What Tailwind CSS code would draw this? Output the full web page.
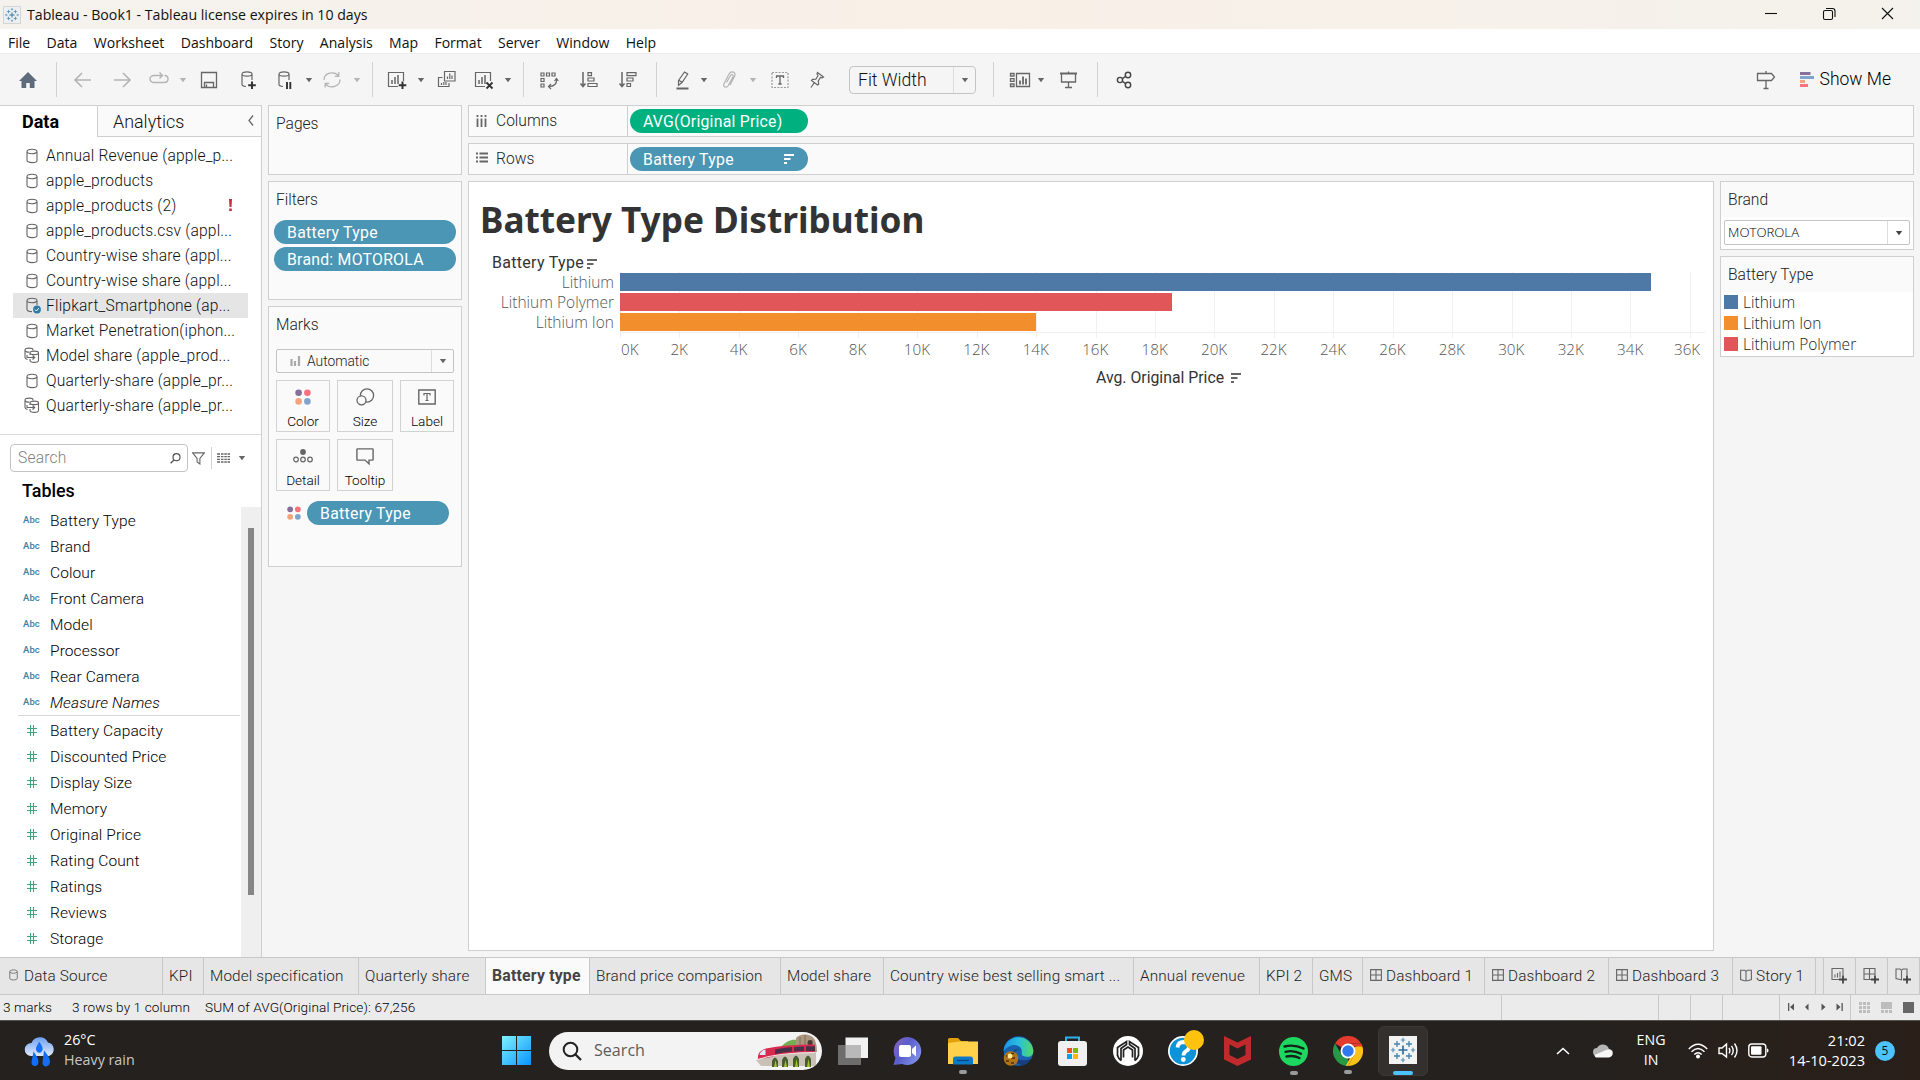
<!DOCTYPE html>
<html lang="en">
<head>
<meta charset="utf-8">
<title>Tableau - Book1</title>
<script src="https://cdn.jsdelivr.net/npm/@tailwindcss/browser@4"></script>
</head>
<body class="w-[1920px] h-[1080px] overflow-hidden bg-[#f5f5f5] font-['Roboto',sans-serif] text-[15.5px] font-light text-[#1c1c1c] flex flex-col whitespace-nowrap">

<svg class="hidden">
  <symbol id="db" viewBox="0 0 12 16"><path d="M1 3.5C1 .4 11 .4 11 3.5V12.5C11 15.3 1 15.3 1 12.5ZM1 3.5C1 6.4 11 6.4 11 3.5" fill="none" stroke="#666" stroke-width="1.1"/></symbol>
  <symbol id="dbcheck" viewBox="0 0 15 17"><path d="M6 14.6C3 14.5 1 13.8 1 12.5V3.5C1 .4 11 .4 11 3.5V8M1 3.5C1 6.4 11 6.4 11 3.5" fill="none" stroke="#666" stroke-width="1.1"/><circle cx="11" cy="12.5" r="3.9" fill="#2f7ba5"/><path d="M9 12.6l1.4 1.4 2.4-2.8" fill="none" stroke="#fff" stroke-width="1"/></symbol>
  <symbol id="dblink" viewBox="0 0 16 17"><path d="M3.5 12.5C1.800 12 1 11.500 1 10.500V3C1 .5 9 .5 9 3V3.500M1 3C1 5 4 5.300 5.500 5" fill="none" stroke="#666" stroke-width="1.1"/><path d="M6 6C6 3.500 14.500 3.500 14.500 6V13.500C14.500 16 6 16 6 13.500V12M6 6C6 8.200 14.500 8.200 14.500 6M6 6V8M3 8v2.500h7.500M8.500 8.500l2.200 2-2.200 2" fill="none" stroke="#666" stroke-width="1.1"/></symbol>
  <symbol id="dots" viewBox="0 0 16 16"><circle cx="3.6" cy="3.8" r="3.3" fill="#86709a"/><circle cx="12.400" cy="3.8" r="3.3" fill="#f8717f"/><circle cx="3.6" cy="12.4" r="3.3" fill="#f2a47c"/><circle cx="12.400" cy="12.4" r="3.3" fill="#80a5cd"/></symbol>
  <symbol id="sort" viewBox="0 0 10 10"><path d="M0 1h10M0 5h6.500M0 9h3" fill="none" stroke="currentColor" stroke-width="2"/></symbol>
  <symbol id="caret" viewBox="0 0 8 6"><path d="M.8 1H7.200L4 5.200Z" fill="currentColor"/></symbol>
  <symbol id="dash" viewBox="0 0 12 12"><path d="M.6.6H11.400V11.400H.6ZM6 .6V11.400M.6 6H11.400" fill="none" stroke="#666" stroke-width="1.1"/></symbol>
  <symbol id="story" viewBox="0 0 12 13"><path d="M6 2.500L4.600 1.200H.6V10.500L4.400 11.700H7.600L11.400 10.500V1.200H7.400ZM6 2.500V11.500" fill="none" stroke="#666" stroke-width="1.1"/></symbol>
  <symbol id="logo" viewBox="0 0 28 28"><path d="M14 9.500v9M9.500 14h9" stroke="#2f6f9f" stroke-width="1.700"/><path d="M8 5v6M5 8h6M20 5v6M17 8h6M8 17v6M5 20h6M20 17v6M17 20h6" stroke="#4484ac" stroke-width="1.3"/><path d="M14 1.800v4.400M11.800 4h4.400M14 21.800v4.400M11.800 24h4.400M4 11.800v4.400M1.800 14h4.400M24 11.800v4.400M21.800 14h4.400" stroke="#5a93b8" stroke-width="1.2"/></symbol>
</svg>

<!-- title bar -->
<header class="h-[29px] shrink-0 flex items-center bg-linear-to-r from-[#f5f2ee] via-[#f9f0e7] to-[#f4f2ec] font-['Open_Sans',sans-serif] font-normal text-[14.150px] text-[#111] pl-[3px]">
  <span class="size-[18px] bg-[#edf0f2] border border-[#d5d5d5] flex items-center justify-center mr-[6px]"><svg class="size-4"><use href="#logo"/></svg></span>
  <span>Tableau - Book1 - Tableau license expires in 10 days</span>
  <svg class="ml-auto mr-5 -mt-px" width="142" height="20" viewBox="0 0 142 20" fill="none" stroke="#111" stroke-width="1.1"><path d="M7 9.500H19"/><rect x="65.500" y="6.500" width="9" height="9" rx="1.500"/><path d="M68 4.500h6.500q2.500 0 2.500 2.500v6"/><path d="M124 4l11 11M135 4l-11 11"/></svg>
</header>

<!-- menu -->
<nav class="h-[25px] shrink-0 bg-white flex items-center font-['Open_Sans',sans-serif] font-normal text-[14.050px] text-[#111] pl-2 pt-[3px] gap-[16.350px] border-b border-[#ececec]">
  <span>File</span><span>Data</span><span>Worksheet</span><span>Dashboard</span><span>Story</span><span>Analysis</span><span>Map</span><span>Format</span><span>Server</span><span>Window</span><span>Help</span>
</nav>

<!-- toolbar -->
<div class="h-[51px] shrink-0 flex items-center text-[#666]">
  <svg class="size-6 ml-4" viewBox="0 0 24 24"><path d="M12 4L3 13h2.500v7h4.700v-5h3.600v5h4.700v-7H21z" fill="#5e6b7a"/></svg>
  <i class="w-px h-[35px] bg-[#d2d2d2] ml-4"></i>
  <svg class="size-6 ml-[14px]" viewBox="0 0 24 24" fill="none" stroke="#b4b4b4" stroke-width="1.600"><path d="M20 12H4.500M11 5l-7 7 7 7"/></svg>
  <svg class="size-6 ml-[15px]" viewBox="0 0 24 24" fill="none" stroke="#b4b4b4" stroke-width="1.600"><path d="M4 12H19.500M13 5l7 7-7 7"/></svg>
  <svg class="size-6 ml-[13px]" viewBox="0 0 24 24" fill="none" stroke="#b4b4b4" stroke-width="1.4"><path d="M15 14.500H7a4 3.500 0 0 1 0-7H15M17.500 7.500q3.500 0 3.500 3.500T17 14.500h-2M12.500 4.500L15.500 7.500l-3 3" /></svg>
  <svg class="w-2 h-1.5 ml-2 text-[#b4b4b4]"><use href="#caret"/></svg>
  <svg class="size-6 ml-[10px]" viewBox="0 0 24 24" fill="none" stroke="#666" stroke-width="1.3"><path d="M4.500 4.500h15v15h-15zM7.500 19v-4.500h9V19M9.500 19v-2.500"/></svg>
  <svg class="size-6 ml-[15px]" viewBox="0 0 24 24" fill="none" stroke="#666" stroke-width="1.2"><path d="M10 18.500C7.500 18.200 6 17.500 6 16.500V6C6 3.200 16 3.200 16 6v6M6 6C6 8.800 16 8.800 16 6"/><path d="M16 13.500v7.500M12.200 17.300h7.600" stroke="#333" stroke-width="2"/></svg>
  <svg class="size-6 ml-[13px]" viewBox="0 0 24 24" fill="none" stroke="#666" stroke-width="1.2"><path d="M10 18.500C7.500 18.200 6 17.500 6 16.500V6C6 3.200 16 3.200 16 6v6M6 6C6 8.800 16 8.800 16 6"/><path d="M14 14v7M17.300 14v7" stroke="#333" stroke-width="1.900"/></svg>
  <svg class="w-2 h-1.5 ml-2"><use href="#caret"/></svg>
  <svg class="size-6 ml-[7px]" viewBox="0 0 24 24" fill="none" stroke="#b4b4b4" stroke-width="1.3"><path d="M4 12a8 7 0 0 1 14.500-4.200M20 11.500a8 7 0 0 1-14.500 4.300M18.800 4v4.300h-4M5.200 19.500v-4.200h4"/></svg>
  <svg class="w-2 h-1.5 ml-[9px] text-[#b4b4b4]"><use href="#caret"/></svg>
  <i class="w-px h-[35px] bg-[#d2d2d2] ml-[11px]"></i>
  <svg class="size-6 ml-[12px] mr-px" viewBox="0 0 24 24" fill="none" stroke="#666" stroke-width="1.2"><path d="M13 18.500H3.500v-14h15v8.500"/><path d="M7 16v-4M10 16V9M13 16V7" stroke-width="1.500"/><path d="M17.500 13.500v7.500M13.700 17.300h7.600" stroke="#333" stroke-width="2"/></svg>
  <svg class="w-2 h-1.5 ml-[7px]"><use href="#caret"/></svg>
  <svg class="size-6 ml-[10px]" viewBox="0 0 24 24" fill="none" stroke="#666" stroke-width="1.2"><path d="M9.500 3.500h10.500v9.500H9.500zM7.500 9.500H3.500V18.500h10.500v-3.500"/><path d="M12.500 11V8.500M14.800 11V5.500M17 11V7.500M6.500 17v-2M8.800 17v-3M11 17v-3"/></svg>
  <svg class="size-6 ml-[13px]" viewBox="0 0 24 24" fill="none" stroke="#666" stroke-width="1.2"><path d="M13 18.500H3.500v-14h15v8.500"/><path d="M7 16v-4M10 16V9M13 16V7" stroke-width="1.500"/><path d="M14.500 14.500l6 6M20.500 14.500l-6 6" stroke="#333" stroke-width="1.800"/></svg>
  <svg class="w-2 h-1.5 ml-2"><use href="#caret"/></svg>
  <i class="w-px h-[35px] bg-[#d2d2d2] ml-[11px]"></i>
  <svg class="size-6 ml-[13px]" viewBox="0 0 24 24" fill="none" stroke="#666" stroke-width="1.2"><path d="M4 5h3v3H4zM9.500 5h3v3h-3zM15 5h3v3h-3zM4 10.500h3v3H4zM4 16h3v3H4z"/><path d="M19.500 11.500c.5 4-2.500 7-7 7M17.500 13l2-2.500 1.800 2.500M14 16l-2.500 2.500L14 21"/></svg>
  <svg class="size-6 ml-4" viewBox="0 0 24 24" fill="none" stroke="#666" stroke-width="1.2"><path d="M6 4v14M3.500 15.500L6 18.500l2.500-3" stroke-width="1.500"/><path d="M11 4.600h3.500v3H11zM11 10h6v3h-6zM11 15.500h9v3h-9z"/></svg>
  <svg class="size-6 ml-[15px]" viewBox="0 0 24 24" fill="none" stroke="#666" stroke-width="1.2"><path d="M6 4v14M3.500 15.500L6 18.500l2.500-3" stroke-width="1.500"/><path d="M11 4.600h9v3h-9zM11 10h6v3h-6zM11 15.500h3.500v3H11z"/></svg>
  <i class="w-px h-[35px] bg-[#d2d2d2] ml-4"></i>
  <svg class="size-6 ml-[14px]" viewBox="0 0 24 24" fill="none" stroke="#666" stroke-width="1.2"><path d="M7.500 12.500L13.500 4l3.200 2L11 14.500l-3.500 2.800zM7.800 12.300l3.300 2"/><path d="M5.500 20.500h12" stroke-width="2"/></svg>
  <svg class="w-2 h-1.5 ml-[5px]"><use href="#caret"/></svg>
  <svg class="size-6 ml-[9px]" viewBox="0 0 24 24" fill="none" stroke="#b4b4b4" stroke-width="1.200"><path d="M9.500 14.500L13.500 7.500c1.300-1.800 3.300-.6 2.500 1.200L11.300 17.500c-2 3-5.800 1.500-4.300-1.700L12 6c2.500-4 7.500-1.700 5.700 2L13 17"/></svg>
  <svg class="w-2 h-1.5 ml-2 text-[#b4b4b4]"><use href="#caret"/></svg>
  <svg class="size-6 ml-[11px]" viewBox="0 0 24 24" fill="none" stroke="#666" stroke-width="1.200"><path d="M4 4.500h16v15H4z" stroke="#999" stroke-dasharray="2 1.300"/><path d="M8.500 10V8h7v2M12 8v8M10.300 16h3.400" stroke-width="1.300"/></svg>
  <svg class="size-6 ml-[13px]" viewBox="0 0 24 24" fill="none" stroke="#666" stroke-width="1.200"><path d="M12.500 4.500l6 4.500-1.300.8-1.700-.3-2.200 3.500.4 3.200-1.200.8-6-4.600 1-1 3.300-.2 2.200-3.500-1-2zM9.300 14.500L6 19.500"/></svg>
  <div class="ml-5 w-[127px] h-7 border border-[#c4c4c4] rounded-sm flex items-center text-[17.600px] text-[#111]"><span class="pl-2 pt-px flex-1">Fit Width</span><span class="w-[22px] h-full border-l border-[#ddd] flex items-center justify-center text-[#666]"><svg class="w-2 h-1.5"><use href="#caret"/></svg></span></div>
  <i class="w-px h-[35px] bg-[#d2d2d2] ml-[17px]"></i>
  <svg class="size-6 ml-[14px]" viewBox="0 0 24 24" fill="none" stroke="#666" stroke-width="1.300"><path d="M2.500 5.500h3.500v2.500H2.500zM2.500 10.700h3.500v2.600H2.500zM2.500 16h3.500v2.500H2.500zM8.500 5.500h13v13h-13z"/><path d="M12 16.500v-4M15 16.500v-8M18 16.500v-6" stroke-width="1.800"/></svg>
  <svg class="w-2 h-1.5 ml-[5px]"><use href="#caret"/></svg>
  <svg class="size-6 ml-[11px]" viewBox="0 0 24 24" fill="none" stroke="#666" stroke-width="1.300"><path d="M5.500 6v8h14V6M12.500 14v5.500M9 19.500h7M12.500 3.500v2"/><path d="M4 5.500h17" stroke-width="2"/></svg>
  <i class="w-px h-[35px] bg-[#d2d2d2] ml-[17px]"></i>
  <svg class="size-6 ml-[14px]" viewBox="0 0 24 24" fill="none" stroke="#444" stroke-width="1.400"><circle cx="8" cy="12" r="2.600"/><circle cx="16" cy="7" r="2.700"/><circle cx="16" cy="17" r="2.700"/><path d="M10.300 10.700L13.600 8.400M10.300 13.300l3.300 2.300"/></svg>
  <svg class="size-6 ml-auto" viewBox="0 0 24 24" fill="none" stroke="#666" stroke-width="1.300"><path d="M3.500 5.500h14l3 3.500-3 3.500h-14zM12 3v2.500M12 12.500v8M9.500 20.500h5"/></svg>
  <svg class="ml-[22px] w-[14px] h-4" viewBox="0 0 14 16"><path d="M0 0h10.500v3H0z" fill="#86709a"/><path d="M0 4h14v3H0z" fill="#80a5cd"/><path d="M0 8h5v3H0z" fill="#f2a47c"/><path d="M0 12h8v3H0z" fill="#f8717f"/></svg>
  <span class="ml-[6px] mr-[29px] text-[17.500px] text-black">Show Me</span>
</div>

<main class="h-[852px] shrink-0 flex">
  <!-- data pane -->
  <aside class="w-[262px] bg-white border-r border-[#cfcfcf] flex flex-col">
    <div class="h-8 flex shrink-0">
      <div class="w-[97px] border-t border-[#cfcfcf] pl-[22px] pt-[2px] text-[18px] font-bold text-black">Data</div>
      <div class="flex-1 bg-[#fafafa] border border-r-0 border-[#cfcfcf] pl-[15px] pt-[3px] text-[17.900px] flex justify-between text-[#111]"><span>Analytics</span><svg class="mr-[7px] mt-[6px]" width="6" height="11" viewBox="0 0 6 11"><path d="M5 .5L1 5.500l4 5" fill="none" stroke="#666" stroke-width="1.300"/></svg></div>
    </div>
    <div id="sources" class="pt-[6px] h-[298px] shrink-0 border-b border-[#dcdcdc] text-[15.600px] tracking-[0.190px] text-[#111]"></div>
    <div class="flex items-center pl-[10px] pt-[9px] shrink-0">
      <div class="w-[178px] h-7 border border-[#c4c4c4] rounded-sm flex items-center justify-between pl-[7px] pr-[6px] text-[#808080] text-[15.600px]"><span class="pt-px tracking-[0.200px]">Search</span><svg width="11" height="11" viewBox="0 0 11 11"><circle cx="6.500" cy="4.200" r="3.500" fill="none" stroke="#555" stroke-width="1.200"/><path d="M4 7L.6 10.200" stroke="#555" stroke-width="1.400"/></svg></div>
      <svg class="ml-1" width="13" height="13" viewBox="0 0 13 13"><path d="M.7.9H12.300L7.900 6.500V12L5.100 10V6.500Z" fill="none" stroke="#666" stroke-width="1.100"/></svg>
      <i class="w-px h-[22px] bg-[#d2d2d2] ml-[6px]"></i>
      <svg class="ml-[5px]" width="13" height="10" viewBox="0 0 13 10"><path d="M0 1h3M4 1h2.500M7.300 1h2.500M10.500 1h2.500M0 3.700h3M4 3.700h2.500M7.300 3.700h2.500M10.500 3.700h2.500M0 6.400h3M4 6.400h2.500M7.300 6.400h2.500M10.500 6.400h2.500M0 9h3M4 9h2.500M7.300 9h2.500M10.500 9h2.500" stroke="#666" stroke-width="1.300"/></svg>
      <svg class="w-2 h-1.5 ml-2 text-[#666]"><use href="#caret"/></svg>
    </div>
    <div class="h-[35px] shrink-0 pl-[22px] pt-[6px] text-[17.900px] font-medium text-black">Tables</div>
    <div class="flex flex-1">
      <div class="flex-1 text-[15.500px] tracking-[0.100px] text-black pt-px"><div id="dims"></div><div class="ml-[18px] h-px bg-[#d9d9d9] -mt-px mr-px"></div><div id="meas" class="pt-[2px]"></div></div>
      <div class="w-5 bg-[#efefef] pt-[21px] pl-[7px]"><div class="w-[6px] h-[367px] bg-[#868686]"></div></div>
    </div>
  </aside>

  <!-- cards -->
  <section class="w-[194px] ml-[6px] flex flex-col gap-[6px] text-[#222] text-[15.600px]">
    <div class="h-[70px] bg-[#fafafa] border border-[#cfcfcf] pl-[7px] pt-[7px]">Pages</div>
    <div class="h-[119px] bg-[#fafafa] border border-[#cfcfcf] pl-[5px] pr-[5px] pt-[7px]">
      <div class="pl-[2px] h-[31px]">Filters</div>
      <div class="h-6 rounded-full bg-[#4a96b4] text-white font-normal text-[15.800px] tracking-[0.300px] leading-[26px] pl-[13px]">Battery Type</div>
      <div class="h-6 mt-[3px] rounded-full bg-[#4a96b4] text-white font-normal text-[15.800px] tracking-[0.250px] leading-[26px] pl-[13px]">Brand: MOTOROLA</div>
    </div>
    <div class="h-[261px] bg-[#fafafa] border border-[#cfcfcf] pl-[7px] pr-[7px] pt-[7px]">
      <div class="h-[35px]">Marks</div>
      <div class="h-6 border border-[#c4c4c4] rounded-xs flex items-center text-[13.800px]"><svg class="ml-[13px]" width="11" height="10" viewBox="0 0 11 10"><path d="M1.500 3v7M5 5v5M9 0v10" stroke="#aaa" stroke-width="2.200"/></svg><span class="ml-[6px] flex-1">Automatic</span><span class="w-[22px] h-full border-l border-[#ddd] flex items-center justify-center text-[#666]"><svg class="w-2 h-1.5"><use href="#caret"/></svg></span></div>
      <div class="grid grid-cols-[54px_56px_54px] gap-x-[7px] gap-y-[7px] mt-[7px] text-[13.600px] text-black">
        <div class="h-[52px] border border-[#d2d2d2] bg-[#fafafa] flex flex-col items-center pt-2"><svg class="size-4"><use href="#dots"/></svg><span class="mt-2 leading-4">Color</span></div>
        <div class="h-[52px] border border-[#d2d2d2] bg-[#fafafa] flex flex-col items-center pt-[7px]"><svg width="19" height="18" viewBox="0 0 19 18"><circle cx="11" cy="7.500" r="6.600" fill="none" stroke="#666" stroke-width="1.300"/><circle cx="5.500" cy="12.300" r="4.500" fill="#fafafa" stroke="#666" stroke-width="1.300"/></svg><span class="mt-[7px] leading-4">Size</span></div>
        <div class="h-[52px] border border-[#d2d2d2] bg-[#fafafa] flex flex-col items-center pt-2"><svg width="18" height="16" viewBox="0 0 18 16" fill="none" stroke="#666"><path d="M.8 1h16.400v14H.8z" stroke-width="1.400"/><path d="M6 6.500V4.500h6v2M9 4.500v7M7.500 11.500h3" stroke-width="1.200"/></svg><span class="mt-2 leading-4">Label</span></div>
        <div class="h-[52px] border border-[#d2d2d2] bg-[#fafafa] flex flex-col items-center pt-2"><svg width="20" height="16" viewBox="0 0 20 16"><circle cx="10" cy="4" r="2.900" fill="#666"/><g fill="none" stroke="#666" stroke-width="1.200"><circle cx="3" cy="11.500" r="2.300"/><circle cx="10" cy="11.500" r="2.300"/><circle cx="17" cy="11.500" r="2.300"/></g></svg><span class="mt-2 leading-4">Detail</span></div>
        <div class="h-[52px] border border-[#d2d2d2] bg-[#fafafa] flex flex-col items-center pt-2"><svg width="18" height="17" viewBox="0 0 18 17"><path d="M1.500.9h15q.6 0 .6.600v10q0 .6-.6.600H13v3.700L9 12.100H1.500q-.6 0-.6-.6v-10q0-.6.6-.6z" fill="none" stroke="#666" stroke-width="1.400"/></svg><span class="mt-[7px] leading-4">Tooltip</span></div>
      </div>
      <div class="flex items-center mt-[10px] pl-[11px] pr-[5px]"><svg class="size-[14px] mr-[6px]" viewBox="0 0 16 16"><use href="#dots"/></svg><div class="flex-1 h-6 rounded-full bg-[#4a96b4] text-white font-normal text-[15.800px] tracking-[0.300px] leading-[26px] pl-[13px]">Battery Type</div></div>
    </div>
  </section>

  <section class="ml-[6px] w-[1446px] flex flex-col gap-[6px]">
    <div class="h-8 bg-[#fafafa] border border-[#cfcfcf] flex items-center text-[#222] text-[15.600px]">
      <svg class="ml-[7px] -mt-px" width="11" height="12" viewBox="0 0 11 12"><path d="M1.500 0v2M5.500 0v2M9.500 0v2M1.500 3.500v8.500M5.500 3.500v8.500M9.500 3.500v8.500" stroke="#666" stroke-width="1.800"/></svg>
      <span class="ml-[9px] w-[131px] pt-[2px]">Columns</span>
      <div class="h-full w-[181px] border-l border-[#cfcfcf] pl-[2px] flex items-center"><div class="w-full h-6 rounded-full bg-[#00b180] text-white font-normal text-[15.800px] tracking-[0.240px] leading-[26px] pl-[13px]">AVG(Original Price)</div></div>
    </div>
    <div class="h-8 bg-[#fafafa] border border-[#cfcfcf] flex items-center text-[#222] text-[15.600px]">
      <svg class="ml-[7px] -mt-[3px]" width="12" height="11" viewBox="0 0 12 11"><path d="M0 1.500h2M0 5.500h2M0 9.500h2M3.500 1.500h8.500M3.500 5.500h8.500M3.500 9.500h8.500" stroke="#666" stroke-width="1.800"/></svg>
      <span class="ml-2 w-[131px] pt-[2px]">Rows</span>
      <div class="h-full w-[181px] border-l border-[#cfcfcf] pl-[2px] flex items-center"><div class="w-full h-6 rounded-full bg-[#4a96b4] text-white font-normal text-[15.800px] tracking-[0.300px] pl-[13px] pr-[14px] flex items-center justify-between"><span class="pt-[2px]">Battery Type</span><svg class="size-[10px]"><use href="#sort"/></svg></div></div>
    </div>
    <div class="flex gap-[6px]">
      <!-- view -->
      <div class="w-[1246px] h-[770px] shrink-0 bg-white border border-[#cfcfcf] text-[#555] font-['Open_Sans',sans-serif]">
        <h1 class="font-['Noto_Sans',sans-serif] font-bold text-[35.200px] leading-[48px] text-[#333] pl-[11px] pt-[13px] h-[69px]">Battery Type Distribution</h1>
        <div class="pl-[23px] h-[21px] leading-[21px] pt-[2px] flex items-center text-[#333] font-['Roboto',sans-serif] font-normal text-[16px] tracking-[0.300px]">Battery Type<svg class="size-[10px] ml-[3px] mt-[3px] text-[#666]"><use href="#sort"/></svg></div>
        <div class="flex">
          <div class="w-[145px] flex flex-col items-end text-[15.500px] leading-5"><span>Lithium</span><span>Lithium Polymer</span><span>Lithium Ion</span></div>
          <div id="plot" class="ml-[6px] w-[1085px] h-[61px] relative border-b border-[#efefef]"></div>
        </div>
        <div id="ticks" class="flex pl-[121px] pt-[6px] text-[15.200px] leading-5"></div>
        <div class="flex items-center pl-[627px] pt-[10px] leading-[18px] text-[15.800px] text-[#333] font-['Roboto',sans-serif] font-normal">Avg. Original Price<svg class="size-[10px] ml-[7px] -mt-px text-[#666]"><use href="#sort"/></svg></div>
      </div>
      <!-- filter and legend -->
      <div class="w-[194px] flex flex-col gap-[6px] text-[#222] text-[15.600px]">
        <div class="h-[69px] border border-[#cfcfcf] bg-white"><div class="h-[35px] bg-[#fafafa] pl-[7px] pt-[7px]">Brand</div>
          <div class="mx-[3px] mt-[3px] h-[25px] border border-[#c4c4c4] rounded-xs flex items-center font-['Open_Sans',sans-serif] text-[13.200px] text-black"><span class="pl-[3px] pt-px flex-1">MOTOROLA</span><span class="w-[22px] h-full border-l border-[#ddd] flex items-center justify-center text-[#444]"><svg class="w-2 h-1.5"><use href="#caret"/></svg></span></div></div>
        <div class="h-[101px] border border-[#cfcfcf] bg-white"><div class="h-[35px] bg-[#fafafa] pl-[7px] pt-[7px]">Battery Type</div>
          <div class="flex flex-col font-['Open_Sans',sans-serif] text-[15.500px] leading-[21px] pl-[3px] text-[#222]">
            <div class="flex items-center"><i class="w-[14px] h-[14px] bg-[#4e79a7] mr-[5px] mb-px"></i>Lithium</div>
            <div class="flex items-center"><i class="w-[14px] h-[14px] bg-[#f28e2b] mr-[5px] mb-px"></i>Lithium Ion</div>
            <div class="flex items-center"><i class="w-[14px] h-[14px] bg-[#e15759] mr-[5px] mb-px"></i>Lithium Polymer</div>
          </div></div>
      </div>
    </div>
  </section>
</main>

<!-- sheet tabs -->
<div id="tabs" class="h-[38px] shrink-0 flex bg-[#e6e6e6] border-y border-[#c8c8c8] text-[15.300px] tracking-[0.150px] text-[#222]"></div>

<!-- status bar -->
<div class="h-[25px] shrink-0 flex items-center bg-[#ebebeb] pl-[3px] text-[13.600px] font-light tracking-[0.100px] text-black">
  <span class="w-[69px]">3 marks</span><span class="w-[133px]">3 rows by 1 column</span><span>SUM of AVG(Original Price): 67,256</span>
  <div class="ml-auto h-full flex">
    <i class="w-[157px] border-l border-[#c8c8c8]"></i><i class="w-8 border-l border-[#c8c8c8]"></i><i class="w-8 border-l border-[#c8c8c8]"></i><i class="w-[57px] border-l border-[#c8c8c8]"></i>
    <div class="w-[71px] border-l border-[#c8c8c8] flex items-center pl-2"><svg class="-mt-px" width="56" height="8" viewBox="0 0 56 8" fill="#555"><path d="M0 0h1.300v8H0zM6 .5v7L2 4zM20.500 .5v7L17 4zM33.500 .5v7L37.500 4zM48.500 .5v7L52.500 4zM53.500 0h1.300v8h-1.300z"/></svg></div>
    <div class="w-[70px] border-l border-[#c8c8c8] flex items-center gap-[11px] pl-2 pb-px"><svg width="11" height="11" viewBox="0 0 11 11" fill="#bdbdbd"><path d="M0 0h3v3H0zM4 0h3v3H4zM8 0h3v3H8zM0 4h3v3H0zM4 4h3v3H4zM8 4h3v3H8zM0 8h3v3H0zM4 8h3v3H4zM8 8h3v3H8z"/></svg><svg width="11" height="11" viewBox="0 0 11 11" fill="#bdbdbd"><path d="M0 0h11v7H0zM0 8h3v3H0zM4 8h3v3H4zM8 8h3v3H8z"/></svg><i class="size-[11px] bg-[#666]"></i></div>
  </div>
</div>

<!-- taskbar -->
<footer class="h-[60px] shrink-0 bg-linear-to-r from-[#24211e] via-[#24211e] via-80% to-[#2a1f19] border-t border-[#55524f] flex items-center text-white font-['Open_Sans',sans-serif] font-normal">
  <svg class="ml-6" width="32" height="34" viewBox="0 0 32 34"><defs><linearGradient id="cl" x1="0" y1="0" x2="0" y2="1"><stop offset="0" stop-color="#6fa1f2"/><stop offset="1" stop-color="#dfe9fa"/></linearGradient></defs><path d="M7 22a6.500 6.500 0 0 1 .5-13A9 9 0 0 1 24 8.500a7 7 0 0 1 1 13.500z" fill="url(#cl)"/><path d="M15 7.500c4 5.500 4.500 8 2.500 10.200s-5.500.5-5.500-2.700c0-3 2-4 3-7.500zM9.500 17.500c4 5.500 6 9 4.500 12.500s-7 2.500-6.500-2zM20 16.500c5.500 6.500 7 10 5.500 13.500s-7.500 3.500-7-2z" fill="#126ff5"/></svg>
  <div class="ml-2 pb-[2px] w-[438px] text-[14.300px] leading-[20px] flex flex-col"><span>26°C</span><span class="text-[#c9c7c5]">Heavy rain</span></div>
  <svg width="29" height="29" viewBox="0 0 29 29"><defs><linearGradient id="wn" x1="0" y1="0" x2="1" y2="1"><stop offset="0" stop-color="#7ff1ff"/><stop offset="1" stop-color="#0795ff"/></linearGradient></defs><path d="M0 0h14v14H0zM15 0h14v14H15zM0 15h14v14H0zM15 15h14v14H15z" fill="url(#wn)"/></svg>
  <div class="ml-[18px] w-[273px] h-[38px] rounded-full bg-[#f3f3f3] flex items-center overflow-hidden text-[16.100px] text-[#5d5d5d]">
    <svg class="ml-[13px]" width="20" height="20" viewBox="0 0 20 20" fill="none" stroke="#222"><circle cx="8.500" cy="8.500" r="6.800" stroke-width="2"/><path d="M13.500 13.500l5.500 5.500" stroke-width="2.300"/></svg>
    <span class="ml-3 flex-1">Search</span>
    <svg class="mr-[3px] mt-px" width="64" height="34" viewBox="0 0 64 34"><path d="M26 13C31 7 37 5 42 6v8z" fill="#74ad52"/><path d="M41 12V4C45-1 56-1 60 6q2 5 2 12H44z" fill="#ab967f"/><path d="M45 12V3M50 12V1M57 12V6" stroke="#7f6c5b"/><ellipse cx="55" cy="9" rx="2.500" ry="3" fill="#4b3a32"/><path d="M1 26q30-8 60-8V32H6z" fill="#c9c0b6"/><path d="M17 33V27q3-7 6 0v6zM27 33V26q3-7 6 0v7zM38 33V25q3-7 6 0v8zM50 33V25q3-7 6 0v8z" fill="#475d2d"/><path d="M19 33l1.500-7 1.500 7zM29 33l1.500-7 1.500 7zM40 33l1.500-8 1.500 8zM52 33l1.500-8 1.500 8z" fill="#a5c22e"/><path d="M3 25Q2 17 11 14.500 30 10.500 60 10.500v7.500Q30 18.500 12 24z" fill="#d8294f"/><path d="M20 15.500q8-2 17-2.500v4.500q-8 .5-17 2.500zM39 13l10-.6V17l-10 .5zM51 12.300h9V17h-9z" fill="#473148"/><path d="M4.500 21q1-4.500 6-5.500v5.500z" fill="#dcebf5"/><path d="M3 25.500Q20 19 60 18.500" stroke="#eee7e2" fill="none"/></svg>
  </div>
  <svg class="ml-4" width="30" height="28" viewBox="0 0 30 28"><path d="M7.500.5H30V21H7.500z" fill="#f1f1f1"/><path d="M0 8h23v20H0z" fill="#6d6d6d"/><path d="M7.500 8H23v13H7.500z" fill="#b9b9b9"/></svg>
  <svg class="ml-[25px]" width="29" height="28" viewBox="0 0 29 28"><defs><linearGradient id="ch" x1="0" y1="0" x2="1" y2=".6"><stop offset="0" stop-color="#8b63b9"/><stop offset=".5" stop-color="#5a5fcb"/><stop offset="1" stop-color="#7f8fe8"/></linearGradient></defs><path d="M14.500 0a14 14 0 1 1-5.500 27L.5 28l2-7A14 14 0 0 1 14.500 0z" fill="url(#ch)"/><rect x="6" y="8" width="12" height="12" rx="2" fill="#fff"/><path d="M19 12l4-3.500v11L19 16z" fill="#fff"/></svg>
  <div class="ml-[26px] flex flex-col items-center pt-[9px]"><svg width="30" height="28" viewBox="0 0 30 28"><path d="M0 2.500Q0 1 1.500 1H10l3 3h7v8H0z" fill="#e3a008"/><path d="M0 6l12-1.500H30V27H0z" fill="#ffd04a"/><path d="M5 27.500V22q0-2.500 2.500-2.500h15q2.500 0 2.500 2.500v5.500z" fill="#0e78c8"/><path d="M9 23.500h12" stroke="#0a4a84" stroke-width="1.300"/></svg><i class="mt-[5px] w-2 h-1 rounded-full bg-[#9b9b9b]"></i></div>
  <svg class="ml-[25px]" width="31" height="30" viewBox="0 0 31 30"><defs><linearGradient id="eg" x1="0" y1="0" x2="1" y2="0"><stop offset="0" stop-color="#1b91e8"/><stop offset=".5" stop-color="#28bfe0"/><stop offset="1" stop-color="#55d860"/></linearGradient></defs><circle cx="15.500" cy="15" r="14.800" fill="#1763b0"/><path d="M.5 15A15 15 0 0 1 30.300 14c.5 6-4 7.500-8 6.500-4-.8-3.500-2.500-3.500-4C20 8 8 6 .5 15z" fill="url(#eg)"/><path d="M19 16c-1.500-3-7-3-7.500 1.500 0 6 8 9 16.500 5-2 3.500-5 6-8 7C12 28 6 22 11.500 14q5-2 7.500 2z" fill="#173f7d"/><circle cx="8" cy="22.500" r="7.300" fill="#b27417"/><path d="M3 20h3M8 17.500h3M8 22h4M3 25h3M8 27h3" stroke="#4e310b" stroke-width="1.500"/><circle cx="7" cy="20" r="2.500" fill="#ffe58c"/></svg>
  <svg class="ml-6" width="29" height="30" viewBox="0 0 29 30"><path d="M8 7V1.500h13V7" fill="none" stroke="#2ab4ef" stroke-width="2"/><rect y="5" width="29" height="25" rx="3" fill="#f0f0f0"/><path d="M9 12h5v5H9z" fill="#f25022"/><path d="M15 12h5v5h-5z" fill="#7fba00"/><path d="M9 18h5v5H9z" fill="#00a4ef"/><path d="M15 18h5v5h-5z" fill="#ffb900"/></svg>
  <svg class="ml-[26px]" width="30" height="30" viewBox="0 0 30 30"><circle cx="15" cy="15" r="15" fill="#fff"/><g fill="none" stroke="#222" stroke-width="1.700"><path d="M4.500 20V11.500L13.500 5.500V8.500L8 12.500V24.500M25.500 20V11.500L16.500 5.500V8.500L22 12.500V24.500"/><path d="M4.500 19.500q1 3 3.500 5M25.500 19.500q-1 3-3.500 5"/><path d="M10.500 21.500V14L15 11l4.500 3v7.500"/></g></svg>
  <svg class="ml-[25px] -mt-[6px]" width="37" height="36" viewBox="0 0 37 36"><circle cx="15" cy="21" r="15" fill="#fff"/><circle cx="15" cy="21" r="13.300" fill="#0c93d8"/><path d="M9.500 17.500q.5-5.500 6-5.500 5.500.5 5.500 5 0 2.500-3 4.200-2.500 1.500-2.500 4.300" fill="none" stroke="#fff" stroke-width="3.800"/><circle cx="15.300" cy="29.500" r="2.400" fill="#fff"/><circle cx="26" cy="10" r="10" fill="#ffc20e"/></svg>
  <svg class="ml-[19px]" width="27" height="30" viewBox="0 0 27 30"><path d="M0 0L13.500 6.500 27 0V23.500L13.500 30 0 23.500z" fill="#c02a2c"/><path d="M5.500 8.500L13.500 12.500 21.500 8.500V19L13.500 23 5.500 19z" fill="#24211e"/></svg>
  <div class="ml-7 flex flex-col items-center pt-[10px]"><svg width="29" height="29" viewBox="0 0 29 29"><circle cx="14.500" cy="14.500" r="14.500" fill="#1ed760"/><path d="M5.500 9.500q9.500-2.500 19 2M6.500 14.800q8-2 15.500 2M7.500 19.500q7-1.500 13 1.500" fill="none" stroke="#16201a" stroke-width="2.400" stroke-linecap="round"/></svg><i class="mt-[5px] w-2 h-1 rounded-full bg-[#9b9b9b]"></i></div>
  <div class="ml-[25px] flex flex-col items-center pt-[9px]"><svg width="30" height="30" viewBox="0 0 30 30"><path d="M15 15L2 7.500A15 15 0 0 1 28 7.500H15z" fill="#e33b2e"/><path d="M15 15L28 7.500A15 15 0 0 1 15 30L21.500 18.500z" fill="#fbc116"/><path d="M15 15V22L15 30A15 15 0 0 1 2 7.500L8.500 18.500z" fill="#279847"/><path d="M15 7.500H28q1 1.500 1.500 3H15z" fill="#e33b2e" /><path d="M21.500 18.800L15 30l-2.300-.2L17 22z" fill="#fbc116"/><circle cx="15" cy="15" r="7.500" fill="#fff"/><circle cx="15" cy="15" r="5.700" fill="#3079ee"/></svg><i class="mt-1 w-2 h-1 rounded-full bg-[#9b9b9b]"></i></div>
  <div class="ml-[15px] size-[50px] rounded-md bg-[#33302e] border border-[#3b3835] flex flex-col items-center pt-[9px]"><div class="size-7 bg-[#f3f3f3]"><svg class="size-7"><use href="#logo"/></svg></div><i class="mt-[7px] w-5 h-1 shrink-0 rounded-full bg-[#4cc2ff]"></i></div>
  <svg class="ml-[128px]" width="14" height="8" viewBox="0 0 14 8"><path d="M1 7l6-5.500L13 7" fill="none" stroke="#fff" stroke-width="1.600"/></svg>
  <svg class="ml-[23px]" width="20" height="14" viewBox="0 0 20 14"><path d="M4 12a4 4 0 0 1 0-8 6.500 6.500 0 0 1 12 1q4 .5 4 4t-4 4H5z" fill="#b5b5b5"/><path d="M3 13.500Q1.500 12.500 1.500 11L12 6.500q2-1.500 4.500-1A4.200 4.200 0 0 1 16 13.500z" fill="#f8f8f8"/></svg>
  <div class="ml-6 w-7 pb-px flex flex-col items-center text-[14.200px] leading-5"><span>ENG</span><span>IN</span></div>
  <svg class="ml-[23px]" width="20" height="16" viewBox="0 0 20 16" fill="none" stroke="#fff" stroke-width="1.400"><path d="M.8 6Q10-3.500 19.200 6M3.500 8.800q6.500-6.500 13 0M6.300 11.500q3.700-3.700 7.400 0"/><circle cx="10" cy="13.500" r="1.300" fill="#fff"/></svg>
  <svg class="ml-[10px]" width="21" height="17" viewBox="0 0 21 17" fill="none" stroke="#fff" stroke-width="1.400"><path d="M1 6h3L8.500 2v13L4 11.500H1zM11 6q1.800 2.700 0 5.300M13.500 3.800q3.500 4.700 0 9.400M16.500 1.500q5 7 0 14"/></svg>
  <svg class="ml-[9px]" width="21" height="15" viewBox="0 0 21 15"><rect x=".8" y="1" width="17" height="13" rx="3" fill="none" stroke="#fff" stroke-width="1.400"/><rect x="3" y="3.300" width="10.500" height="8.400" rx="1" fill="#fff"/><path d="M19 5.500q1.500 0 1.500 2t-1.500 2z" fill="#fff"/></svg>
  <div class="ml-auto pb-[2px] flex flex-col items-end text-[14.600px] leading-5"><span>21:02</span><span>14-10-2023</span></div>
  <span class="ml-[10px] mr-[25px] size-5 rounded-full bg-[#4cc2ff] text-[#111] text-[12px] flex items-center justify-center">5</span>
</footer>

<script>
const $ = id => document.getElementById(id);

const sources = [
  ['Annual Revenue (apple_p...','db'],['apple_products','db'],['apple_products (2)','db'],['apple_products.csv (appl...','db'],
  ['Country-wise share (appl...','db'],['Country-wise share (appl...','db'],['Flipkart_Smartphone (ap...','dbcheck'],
  ['Market Penetration(iphon...','db'],['Model share (apple_prod...','dblink'],['Quarterly-share (apple_pr...','db'],['Quarterly-share (apple_pr...','dblink']
];
const srcIcon = {
  db: '<svg class="w-3 h-4 ml-[13px] mr-[8px]"><use href="#db"/></svg>',
  dbcheck: '<svg class="w-[15px] h-[17px] ml-[13px] mr-[5px]"><use href="#dbcheck"/></svg>',
  dblink: '<svg class="w-4 h-[17px] ml-[11px] mr-[6px]"><use href="#dblink"/></svg>'
};
$('sources').innerHTML = sources.map(([name, icon], i) =>
  `<div class="ml-[13px] mr-[13px] h-[25px] flex items-center ${i === 6 ? 'bg-[#e5e5e5]' : ''}">${srcIcon[icon]}<span class="pt-[2px]">${name}</span>${i === 2 ? '<svg class="ml-auto mr-4 -mt-px" width="3" height="12" viewBox="0 0 3 12"><path d="M0 0h3l-.5 8h-2zM.2 9.500h2.600V12H.2z" fill="#c4303c"/></svg>' : ''}</div>`).join('');

$('dims').innerHTML = ['Battery Type','Brand','Colour','Front Camera','Model','Processor','Rear Camera','Measure Names'].map((n, i) =>
  `<div class="h-[26px] flex items-center"><span class="w-[27px] ml-[23px] -mt-px text-[9.500px] font-medium text-[#3f7f9e]">Abc</span><span class="pt-px ${i === 7 ? 'italic' : ''}">${n}</span></div>`).join('');
$('meas').innerHTML = ['Battery Capacity','Discounted Price','Display Size','Memory','Original Price','Rating Count','Ratings','Reviews','Storage'].map(n =>
  `<div class="h-[26px] flex items-center"><svg class="ml-[27px] mr-[13px] -mt-[2px]" width="10" height="11" viewBox="0 0 10 11"><path d="M3.500 0v11M6.500 0v11M0 3.500h10M0 7.500h10" stroke="#3fa37c" stroke-width="1.100"/></svg><span class="pt-px">${n}</span></div>`).join('');

const pxPerK = 29.72;
const bars = [[34.69,'bg-[#4e79a7]'],[18.57,'bg-[#e15759]'],[13.99,'bg-[#f28e2b]']];
const grid = Array.from({length: 19}, (_, i) => `<i class="absolute top-0 w-px h-[66px] bg-[#f0f0f0]" style="left:${Math.round(i * 2 * pxPerK)}px"></i>`).join('');
$('plot').innerHTML = grid + '<div class="relative flex flex-col gap-[2px] pt-px">' +
  bars.map(([v, c]) => `<i class="h-[18px] ${c}" style="width:${Math.round(v * pxPerK)}px"></i>`).join('') + '</div>';
$('ticks').innerHTML = Array.from({length: 19}, (_, i) =>
  `<span class="w-[59.44px] text-center shrink-0 ${i === 0 ? 'pl-[20px]' : i === 18 ? 'pr-[5px]' : ''}">${i * 2}K</span>`).join('');

const tabs = [['Data Source',163,'src'],['KPI',41],['Model specification',155],['Quarterly share',127],['Battery type',104,'on'],['Brand price comparision',191],
  ['Model share',103],['Country wise best selling smart ...',250],['Annual revenue',126],['KPI 2',53],['GMS',50],
  ['Dashboard 1',122,'dash'],['Dashboard 2',124,'dash'],['Dashboard 3',124,'dash'],['Story 1',83,'story'],['',8],['',32,'n1'],['',32,'n2'],['',32,'n3']];
const tabIcon = {
  src: '<svg class="w-[9px] h-3 ml-[3px] mr-[6px] -mt-[3px]" viewBox="0 0 12 16"><use href="#db"/></svg>',
  dash: '<svg class="w-3 h-3 ml-[1px] mr-[4px] -mt-[3px]"><use href="#dash"/></svg>',
  story: '<svg class="w-3 h-[13px] ml-[1px] mr-[4px] -mt-[2px]"><use href="#story"/></svg>',
  n1: '<svg class="ml-[1px]" width="16" height="16" viewBox="0 0 16 16" fill="none" stroke="#666" stroke-width="1.100"><path d="M8.500 11.500H1v-11h11v7"/><path d="M4 9.500V6.500M6.500 9.500V5M9 9.500V3.500"/><path d="M12 7.500v8M8 11.500h8" stroke="#444" stroke-width="1.800"/></svg>',
  n2: '<svg class="ml-[1px]" width="16" height="16" viewBox="0 0 16 16" fill="none" stroke="#666" stroke-width="1.100"><path d="M8 11.500H1v-11h11v7M6.500 .5v11M1 6h11"/><path d="M12 7.500v8M8 11.500h8" stroke="#444" stroke-width="1.800"/></svg>',
  n3: '<svg class="ml-[1px]" width="16" height="16" viewBox="0 0 16 16" fill="none" stroke="#666" stroke-width="1.100"><path d="M7 12L1 10.500V1h4l1.500 1.300L8 1h4v6.500M6.500 2.300V12"/><path d="M12 7.500v8M8 11.500h8" stroke="#444" stroke-width="1.800"/></svg>'
};
$('tabs').innerHTML = tabs.map(([n, w, k]) =>
  `<div class="shrink-0 border-r border-[#c8c8c8] pl-[6px] flex items-center ${k === 'on' ? 'bg-[#fafafa] font-bold text-[#444] text-[15.800px] tracking-[0.200px] pb-px' : ''}" style="width:${w}px">${tabIcon[k] || ''}<span class="pt-px">${n}</span></div>`).join('');
</script>
</body>
</html>
